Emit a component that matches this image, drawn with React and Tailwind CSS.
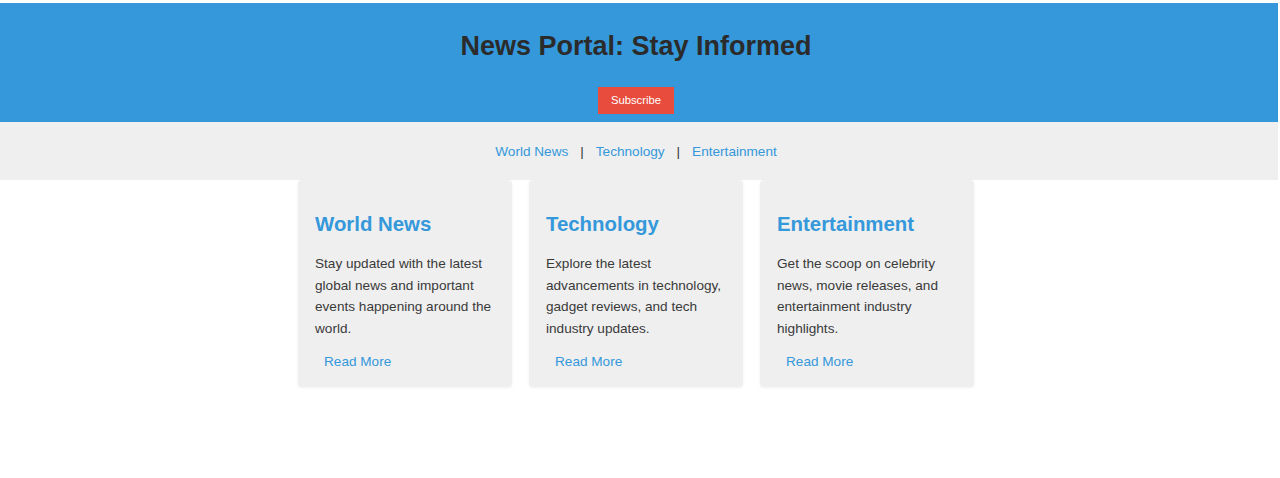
export default function App() {
  const cards = [
    {
      title: "World News",
      text: "Stay updated with the latest global news and important events happening around the world.",
    },
    {
      title: "Technology",
      text: "Explore the latest advancements in technology, gadget reviews, and tech industry updates.",
    },
    {
      title: "Entertainment",
      text: "Get the scoop on celebrity news, movie releases, and entertainment industry highlights.",
    },
  ];
  return (
    <div
      className="w-[1278px] pt-[3px] bg-white min-h-[478px]"
      style={{ fontFamily: '"Liberation Sans", Arial, sans-serif' }}
    >
      <header className="bg-[#3498db] h-[119px] flex flex-col items-center pr-[6px] pt-[28px]">
        <h1 className="text-[27px] leading-[31px] font-bold text-[#2b2b2b] m-0">
          News Portal: Stay Informed
        </h1>
        <button className="mt-[25px] w-[76px] h-[27px] bg-[#e74c3c] text-white text-[11.3px] leading-[13px] flex items-center justify-center">
          Subscribe
        </button>
      </header>
      <nav className="bg-[#efefef] h-[58px] flex items-center justify-center pr-[6px] pt-[2px] text-[13.6px] leading-[16px]">
        <a className="text-[#3498db]">World News</a>
        <span className="text-[#333] mx-[12px]">|</span>
        <a className="text-[#3498db]">Technology</a>
        <span className="text-[#333] mx-[12px]">|</span>
        <a className="text-[#3498db]">Entertainment</a>
      </nav>
      <main className="flex justify-center gap-[17px] pr-[6px]">
        {cards.map((c) => (
          <div
            key={c.title}
            className="w-[214px] bg-[#efefef] rounded-[4px] px-[17px] pt-[32px] pb-[14px] shadow-[0_1px_3px_rgba(0,0,0,0.06)]"
          >
            <h3 className="text-[20.4px] leading-[24px] font-bold text-[#3498db]">
              {c.title}
            </h3>
            <p className="mt-[17px] text-[13.6px] leading-[21.6px] text-[#3a3a3a]">
              {c.text}
            </p>
            <a className="inline-block mt-[15px] pl-[9px] text-[13.6px] leading-[16px] text-[#3498db]">
              Read More
            </a>
          </div>
        ))}
      </main>
    </div>
  );
}
